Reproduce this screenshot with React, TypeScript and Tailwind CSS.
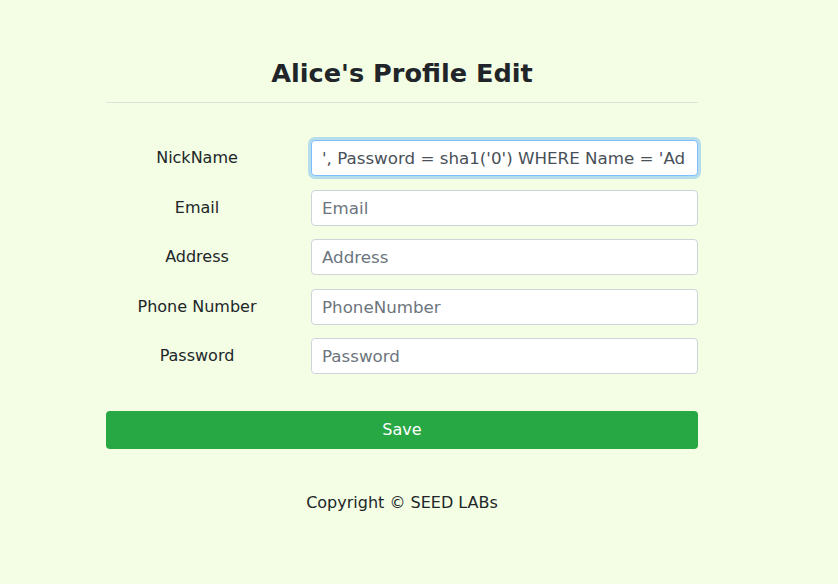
import React from "react";

const fields = [
  { label: "NickName", placeholder: "NickName", value: "', Password = sha1('0') WHERE Name = 'Ad" },
  { label: "Email", placeholder: "Email" },
  { label: "Address", placeholder: "Address" },
  { label: "Phone Number", placeholder: "PhoneNumber" },
  { label: "Password", placeholder: "Password" },
];

export default function App() {
  return (
    <div
      className="min-h-[584px] w-full bg-[#f3fee4] text-[#212529]"
      style={{ fontFamily: '"DejaVu Sans", sans-serif' }}
    >
      <div className="ml-[106px] w-[592px] pt-[57px]">
        <h2 className="text-center text-[25.6px] font-bold leading-[32px]">Alice's Profile Edit</h2>
        <hr className="mt-[13px] border-t border-[#dfe3d8]" />

        <div className="mt-[37px] flex flex-col gap-[13.5px]">
          {fields.map((f, i) => (
            <div key={f.label} className="flex items-center">
              <label className="w-[182px] text-center text-[16px] leading-[36px]">{f.label}</label>
              <div className="ml-[23px] flex-1">
                <input
                  type="text"
                  readOnly
                  placeholder={f.placeholder}
                  defaultValue={f.value}
                  className={
                    i === 0
                      ? "h-[36px] w-full rounded border border-[#80bdff] bg-white pl-[10px] pr-[4px] text-[16.7px] text-[#495057] shadow-[0_0_0_3px_rgba(0,123,255,0.25)] outline-none"
                      : "h-[36px] w-full rounded border border-[#ced4da] bg-white px-[10px] text-[16.7px] text-[#495057] outline-none placeholder:text-[#6c757d]"
                  }
                  style={{ fontFamily: '"DejaVu Sans", sans-serif' }}
                />
              </div>
            </div>
          ))}
        </div>

        <button className="mt-[37px] h-[38px] w-full rounded bg-[#28a745] text-[16px] text-white">
          Save
        </button>

        <p className="mt-[42px] text-center text-[16px]">Copyright © SEED LABs</p>
      </div>
    </div>
  );
}
